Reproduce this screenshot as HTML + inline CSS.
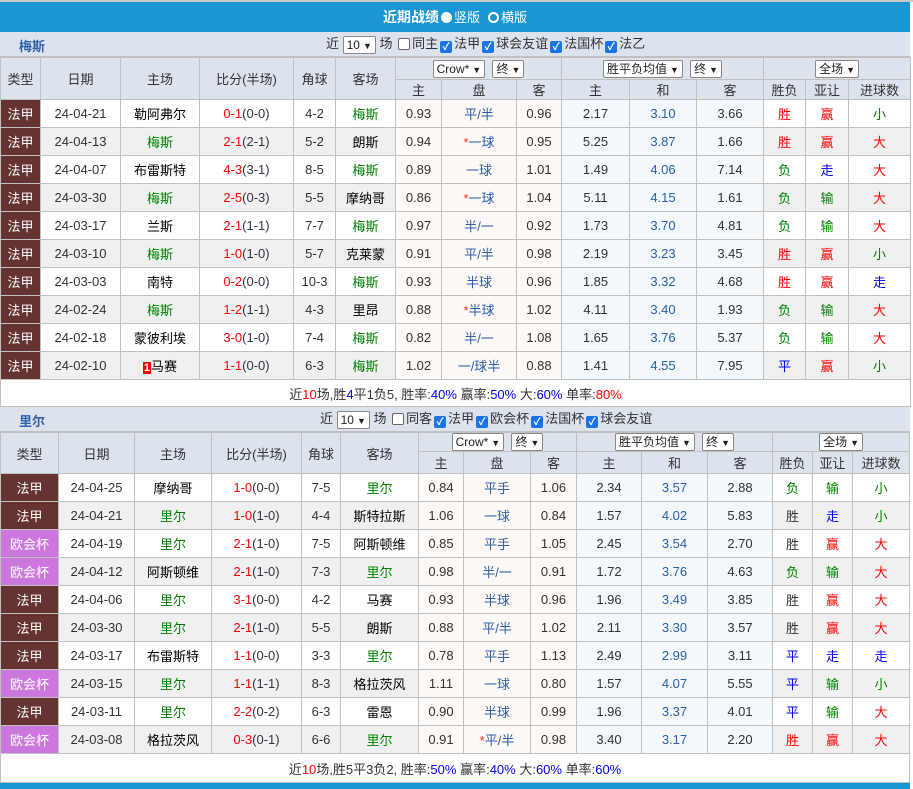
<!DOCTYPE html>
<html><head><meta charset="utf-8">
<style>
*{margin:0;padding:0;box-sizing:border-box}
body{width:913px;height:786px;overflow:hidden;background:#fff;font-family:"Liberation Sans","Noto Sans CJK SC",sans-serif;font-size:13px;color:#333}
.top{height:2px;background:#c8c8c8}
.bar{height:30px;background:#1b96d5;color:#fff;text-align:center;line-height:30px;font-weight:bold;font-size:14px;width:910px}
.bar span{font-weight:normal;font-size:13px}
.rad{display:inline-block;width:11px;height:11px;border-radius:50%;vertical-align:-1px;margin:0 2px}
.sec{position:relative;height:25px;background:#dce3ec;width:910px;border-bottom:1px solid #c0c0c0}
.sec b{position:absolute;left:19px;top:4px;color:#3060a8;font-size:13px}
.sec .ctl{position:absolute;top:3px;font-size:13px;line-height:18px;white-space:nowrap}
.sel{display:inline-block;border:1px solid #888;background:#fff;border-radius:2px;height:18px;line-height:16px;padding:0 3px;font-size:12px;vertical-align:middle;color:#222}
.sel i{font-style:normal;font-size:9px;margin-left:3px}
.cb{display:inline-block;width:12px;height:12px;border:1px solid #666;border-radius:2px;background:#fff;vertical-align:-2px;margin:0 2px}
.cb.on{background:#1a73e8;border-color:#1a73e8;color:#fff;font-size:10px;line-height:11px;text-align:center;font-weight:bold}
table{border-collapse:collapse;table-layout:fixed}
td{border:1px solid #c0c0c0;text-align:center;white-space:nowrap;overflow:hidden;height:28px;padding:0}
thead td{background:#dce3ec;color:#333;height:auto}
.t1{width:910px}.t2{width:909px}
.g td{background:#f0f0f0}
td.fj,.g td.fj{background:#663333;color:#fff}
td.oh,.g td.oh{background:#cc77dd;color:#fff}
td.o,.g td.o{background:#fdf9f6}
td.e,.g td.e{background:#f2f8fc}
.gr{color:#008000}.rd{color:#f00}.bl{color:#0000ee}.pb{color:#2b5fa5}.dk{color:#000}
.s{color:#f00}.h{color:#334}
.st{color:#f22}
.sum td{height:27px;background:#fff}
.t2 .sum td{height:29px}
.num1{background:#f00;color:#fff;font-weight:bold;font-size:11px;padding:0 1px}
.bot{height:6px;background:#1b96d5;width:910px}
</style></head><body>
<div class="top"></div>
<div class="bar">近期战绩<span class="rad" style="background:#fff"></span><span>竖版</span> <span class="rad" style="border:2px solid #fff;margin-left:4px"></span><span>横版</span></div>
<div class="sec"><b>梅斯</b><div class="ctl" style="left:326px">近 <span class="sel">10<i>▼</i></span> 场 <span class="cb"></span>同主<span class="cb on">✓</span>法甲<span class="cb on">✓</span>球会友谊<span class="cb on">✓</span>法国杯<span class="cb on">✓</span>法乙</div></div>
<table class="t1">
<colgroup><col style="width:40px"><col style="width:80px"><col style="width:79px"><col style="width:94px"><col style="width:42px"><col style="width:60px"><col style="width:46px"><col style="width:75px"><col style="width:45px"><col style="width:68px"><col style="width:67px"><col style="width:67px"><col style="width:42px"><col style="width:43px"><col style="width:62px"></colgroup>
<thead><tr style="height:22px"><td rowspan="2">类型</td><td rowspan="2">日期</td><td rowspan="2">主场</td><td rowspan="2">比分(半场)</td><td rowspan="2">角球</td><td rowspan="2">客场</td><td colspan="3"><span class="sel">Crow*<i>▼</i></span> &nbsp;<span class="sel">终<i>▼</i></span></td><td colspan="3"><span class="sel">胜平负均值<i>▼</i></span> &nbsp;<span class="sel">终<i>▼</i></span></td><td colspan="3"><span class="sel">全场<i>▼</i></span></td></tr>
<tr style="height:18px"><td>主</td><td>盘</td><td>客</td><td>主</td><td>和</td><td>客</td><td>胜负</td><td>亚让</td><td>进球数</td></tr></thead>
<tbody>
<tr><td class="fj">法甲</td><td>24-04-21</td><td class="dk">勒阿弗尔</td><td><span class="s">0-1</span><span class="h">(0-0)</span></td><td>4-2</td><td class="gr">梅斯</td><td class="o">0.93</td><td class="o pb">平/半</td><td class="o">0.96</td><td class="e">2.17</td><td class="e pb">3.10</td><td class="e">3.66</td><td class="rd">胜</td><td class="rd">赢</td><td class="gr">小</td></tr>
<tr class="g"><td class="fj">法甲</td><td>24-04-13</td><td class="gr">梅斯</td><td><span class="s">2-1</span><span class="h">(2-1)</span></td><td>5-2</td><td class="dk">朗斯</td><td class="o">0.94</td><td class="o pb"><span class="st">*</span>一球</td><td class="o">0.95</td><td class="e">5.25</td><td class="e pb">3.87</td><td class="e">1.66</td><td class="rd">胜</td><td class="rd">赢</td><td class="rd">大</td></tr>
<tr><td class="fj">法甲</td><td>24-04-07</td><td class="dk">布雷斯特</td><td><span class="s">4-3</span><span class="h">(3-1)</span></td><td>8-5</td><td class="gr">梅斯</td><td class="o">0.89</td><td class="o pb">一球</td><td class="o">1.01</td><td class="e">1.49</td><td class="e pb">4.06</td><td class="e">7.14</td><td class="gr">负</td><td class="bl">走</td><td class="rd">大</td></tr>
<tr class="g"><td class="fj">法甲</td><td>24-03-30</td><td class="gr">梅斯</td><td><span class="s">2-5</span><span class="h">(0-3)</span></td><td>5-5</td><td class="dk">摩纳哥</td><td class="o">0.86</td><td class="o pb"><span class="st">*</span>一球</td><td class="o">1.04</td><td class="e">5.11</td><td class="e pb">4.15</td><td class="e">1.61</td><td class="gr">负</td><td class="gr">输</td><td class="rd">大</td></tr>
<tr><td class="fj">法甲</td><td>24-03-17</td><td class="dk">兰斯</td><td><span class="s">2-1</span><span class="h">(1-1)</span></td><td>7-7</td><td class="gr">梅斯</td><td class="o">0.97</td><td class="o pb">半/一</td><td class="o">0.92</td><td class="e">1.73</td><td class="e pb">3.70</td><td class="e">4.81</td><td class="gr">负</td><td class="gr">输</td><td class="rd">大</td></tr>
<tr class="g"><td class="fj">法甲</td><td>24-03-10</td><td class="gr">梅斯</td><td><span class="s">1-0</span><span class="h">(1-0)</span></td><td>5-7</td><td class="dk">克莱蒙</td><td class="o">0.91</td><td class="o pb">平/半</td><td class="o">0.98</td><td class="e">2.19</td><td class="e pb">3.23</td><td class="e">3.45</td><td class="rd">胜</td><td class="rd">赢</td><td class="gr">小</td></tr>
<tr><td class="fj">法甲</td><td>24-03-03</td><td class="dk">南特</td><td><span class="s">0-2</span><span class="h">(0-0)</span></td><td>10-3</td><td class="gr">梅斯</td><td class="o">0.93</td><td class="o pb">半球</td><td class="o">0.96</td><td class="e">1.85</td><td class="e pb">3.32</td><td class="e">4.68</td><td class="rd">胜</td><td class="rd">赢</td><td class="bl">走</td></tr>
<tr class="g"><td class="fj">法甲</td><td>24-02-24</td><td class="gr">梅斯</td><td><span class="s">1-2</span><span class="h">(1-1)</span></td><td>4-3</td><td class="dk">里昂</td><td class="o">0.88</td><td class="o pb"><span class="st">*</span>半球</td><td class="o">1.02</td><td class="e">4.11</td><td class="e pb">3.40</td><td class="e">1.93</td><td class="gr">负</td><td class="gr">输</td><td class="rd">大</td></tr>
<tr><td class="fj">法甲</td><td>24-02-18</td><td class="dk">蒙彼利埃</td><td><span class="s">3-0</span><span class="h">(1-0)</span></td><td>7-4</td><td class="gr">梅斯</td><td class="o">0.82</td><td class="o pb">半/一</td><td class="o">1.08</td><td class="e">1.65</td><td class="e pb">3.76</td><td class="e">5.37</td><td class="gr">负</td><td class="gr">输</td><td class="rd">大</td></tr>
<tr class="g"><td class="fj">法甲</td><td>24-02-10</td><td class="dk"><span class="num1">1</span>马赛</td><td><span class="s">1-1</span><span class="h">(0-0)</span></td><td>6-3</td><td class="gr">梅斯</td><td class="o">1.02</td><td class="o pb">一/球半</td><td class="o">0.88</td><td class="e">1.41</td><td class="e pb">4.55</td><td class="e">7.95</td><td class="bl">平</td><td class="rd">赢</td><td class="gr">小</td></tr>
<tr class="sum"><td colspan="15">近<span class="rd">10</span>场,胜<span class="bl">4</span>平1负5, 胜率:<span class="bl">40%</span> 赢率:<span class="bl">50%</span> 大:<span class="bl">60%</span> 单率:<span class="rd">80%</span></td></tr>
</tbody></table>
<div class="sec"><b>里尔</b><div class="ctl" style="left:320px">近 <span class="sel">10<i>▼</i></span> 场 <span class="cb"></span>同客<span class="cb on">✓</span>法甲<span class="cb on">✓</span>欧会杯<span class="cb on">✓</span>法国杯<span class="cb on">✓</span>球会友谊</div></div>
<table class="t2">
<colgroup><col style="width:58px"><col style="width:76px"><col style="width:77px"><col style="width:90px"><col style="width:39px"><col style="width:78px"><col style="width:45px"><col style="width:67px"><col style="width:46px"><col style="width:65px"><col style="width:66px"><col style="width:65px"><col style="width:40px"><col style="width:40px"><col style="width:57px"></colgroup>
<thead><tr style="height:19px"><td rowspan="2">类型</td><td rowspan="2">日期</td><td rowspan="2">主场</td><td rowspan="2">比分(半场)</td><td rowspan="2">角球</td><td rowspan="2">客场</td><td colspan="3"><span class="sel">Crow*<i>▼</i></span> &nbsp;<span class="sel">终<i>▼</i></span></td><td colspan="3"><span class="sel">胜平负均值<i>▼</i></span> &nbsp;<span class="sel">终<i>▼</i></span></td><td colspan="3"><span class="sel">全场<i>▼</i></span></td></tr>
<tr style="height:22px"><td>主</td><td>盘</td><td>客</td><td>主</td><td>和</td><td>客</td><td>胜负</td><td>亚让</td><td>进球数</td></tr></thead>
<tbody>
<tr><td class="fj">法甲</td><td>24-04-25</td><td class="dk">摩纳哥</td><td><span class="s">1-0</span><span class="h">(0-0)</span></td><td>7-5</td><td class="gr">里尔</td><td class="o">0.84</td><td class="o pb">平手</td><td class="o">1.06</td><td class="e">2.34</td><td class="e pb">3.57</td><td class="e">2.88</td><td class="gr">负</td><td class="gr">输</td><td class="gr">小</td></tr>
<tr class="g"><td class="fj">法甲</td><td>24-04-21</td><td class="gr">里尔</td><td><span class="s">1-0</span><span class="h">(1-0)</span></td><td>4-4</td><td class="dk">斯特拉斯</td><td class="o">1.06</td><td class="o pb">一球</td><td class="o">0.84</td><td class="e">1.57</td><td class="e pb">4.02</td><td class="e">5.83</td><td>胜</td><td class="bl">走</td><td class="gr">小</td></tr>
<tr><td class="oh">欧会杯</td><td>24-04-19</td><td class="gr">里尔</td><td><span class="s">2-1</span><span class="h">(1-0)</span></td><td>7-5</td><td class="dk">阿斯顿维</td><td class="o">0.85</td><td class="o pb">平手</td><td class="o">1.05</td><td class="e">2.45</td><td class="e pb">3.54</td><td class="e">2.70</td><td>胜</td><td class="rd">赢</td><td class="rd">大</td></tr>
<tr class="g"><td class="oh">欧会杯</td><td>24-04-12</td><td class="dk">阿斯顿维</td><td><span class="s">2-1</span><span class="h">(1-0)</span></td><td>7-3</td><td class="gr">里尔</td><td class="o">0.98</td><td class="o pb">半/一</td><td class="o">0.91</td><td class="e">1.72</td><td class="e pb">3.76</td><td class="e">4.63</td><td class="gr">负</td><td class="gr">输</td><td class="rd">大</td></tr>
<tr><td class="fj">法甲</td><td>24-04-06</td><td class="gr">里尔</td><td><span class="s">3-1</span><span class="h">(0-0)</span></td><td>4-2</td><td class="dk">马赛</td><td class="o">0.93</td><td class="o pb">半球</td><td class="o">0.96</td><td class="e">1.96</td><td class="e pb">3.49</td><td class="e">3.85</td><td>胜</td><td class="rd">赢</td><td class="rd">大</td></tr>
<tr class="g"><td class="fj">法甲</td><td>24-03-30</td><td class="gr">里尔</td><td><span class="s">2-1</span><span class="h">(1-0)</span></td><td>5-5</td><td class="dk">朗斯</td><td class="o">0.88</td><td class="o pb">平/半</td><td class="o">1.02</td><td class="e">2.11</td><td class="e pb">3.30</td><td class="e">3.57</td><td>胜</td><td class="rd">赢</td><td class="rd">大</td></tr>
<tr><td class="fj">法甲</td><td>24-03-17</td><td class="dk">布雷斯特</td><td><span class="s">1-1</span><span class="h">(0-0)</span></td><td>3-3</td><td class="gr">里尔</td><td class="o">0.78</td><td class="o pb">平手</td><td class="o">1.13</td><td class="e">2.49</td><td class="e pb">2.99</td><td class="e">3.11</td><td class="bl">平</td><td class="bl">走</td><td class="bl">走</td></tr>
<tr class="g"><td class="oh">欧会杯</td><td>24-03-15</td><td class="gr">里尔</td><td><span class="s">1-1</span><span class="h">(1-1)</span></td><td>8-3</td><td class="dk">格拉茨风</td><td class="o">1.11</td><td class="o pb">一球</td><td class="o">0.80</td><td class="e">1.57</td><td class="e pb">4.07</td><td class="e">5.55</td><td class="bl">平</td><td class="gr">输</td><td class="gr">小</td></tr>
<tr><td class="fj">法甲</td><td>24-03-11</td><td class="gr">里尔</td><td><span class="s">2-2</span><span class="h">(0-2)</span></td><td>6-3</td><td class="dk">雷恩</td><td class="o">0.90</td><td class="o pb">半球</td><td class="o">0.99</td><td class="e">1.96</td><td class="e pb">3.37</td><td class="e">4.01</td><td class="bl">平</td><td class="gr">输</td><td class="rd">大</td></tr>
<tr class="g"><td class="oh">欧会杯</td><td>24-03-08</td><td class="dk">格拉茨风</td><td><span class="s">0-3</span><span class="h">(0-1)</span></td><td>6-6</td><td class="gr">里尔</td><td class="o">0.91</td><td class="o pb"><span class="st">*</span>平/半</td><td class="o">0.98</td><td class="e">3.40</td><td class="e pb">3.17</td><td class="e">2.20</td><td class="rd">胜</td><td class="rd">赢</td><td class="rd">大</td></tr>
<tr class="sum"><td colspan="15">近<span class="rd">10</span>场,胜5平3负2, 胜率:<span class="bl">50%</span> 赢率:<span class="bl">40%</span> 大:<span class="bl">60%</span> 单率:<span class="bl">60%</span></td></tr>
</tbody></table>
<div class="bot"></div>
</body></html>
